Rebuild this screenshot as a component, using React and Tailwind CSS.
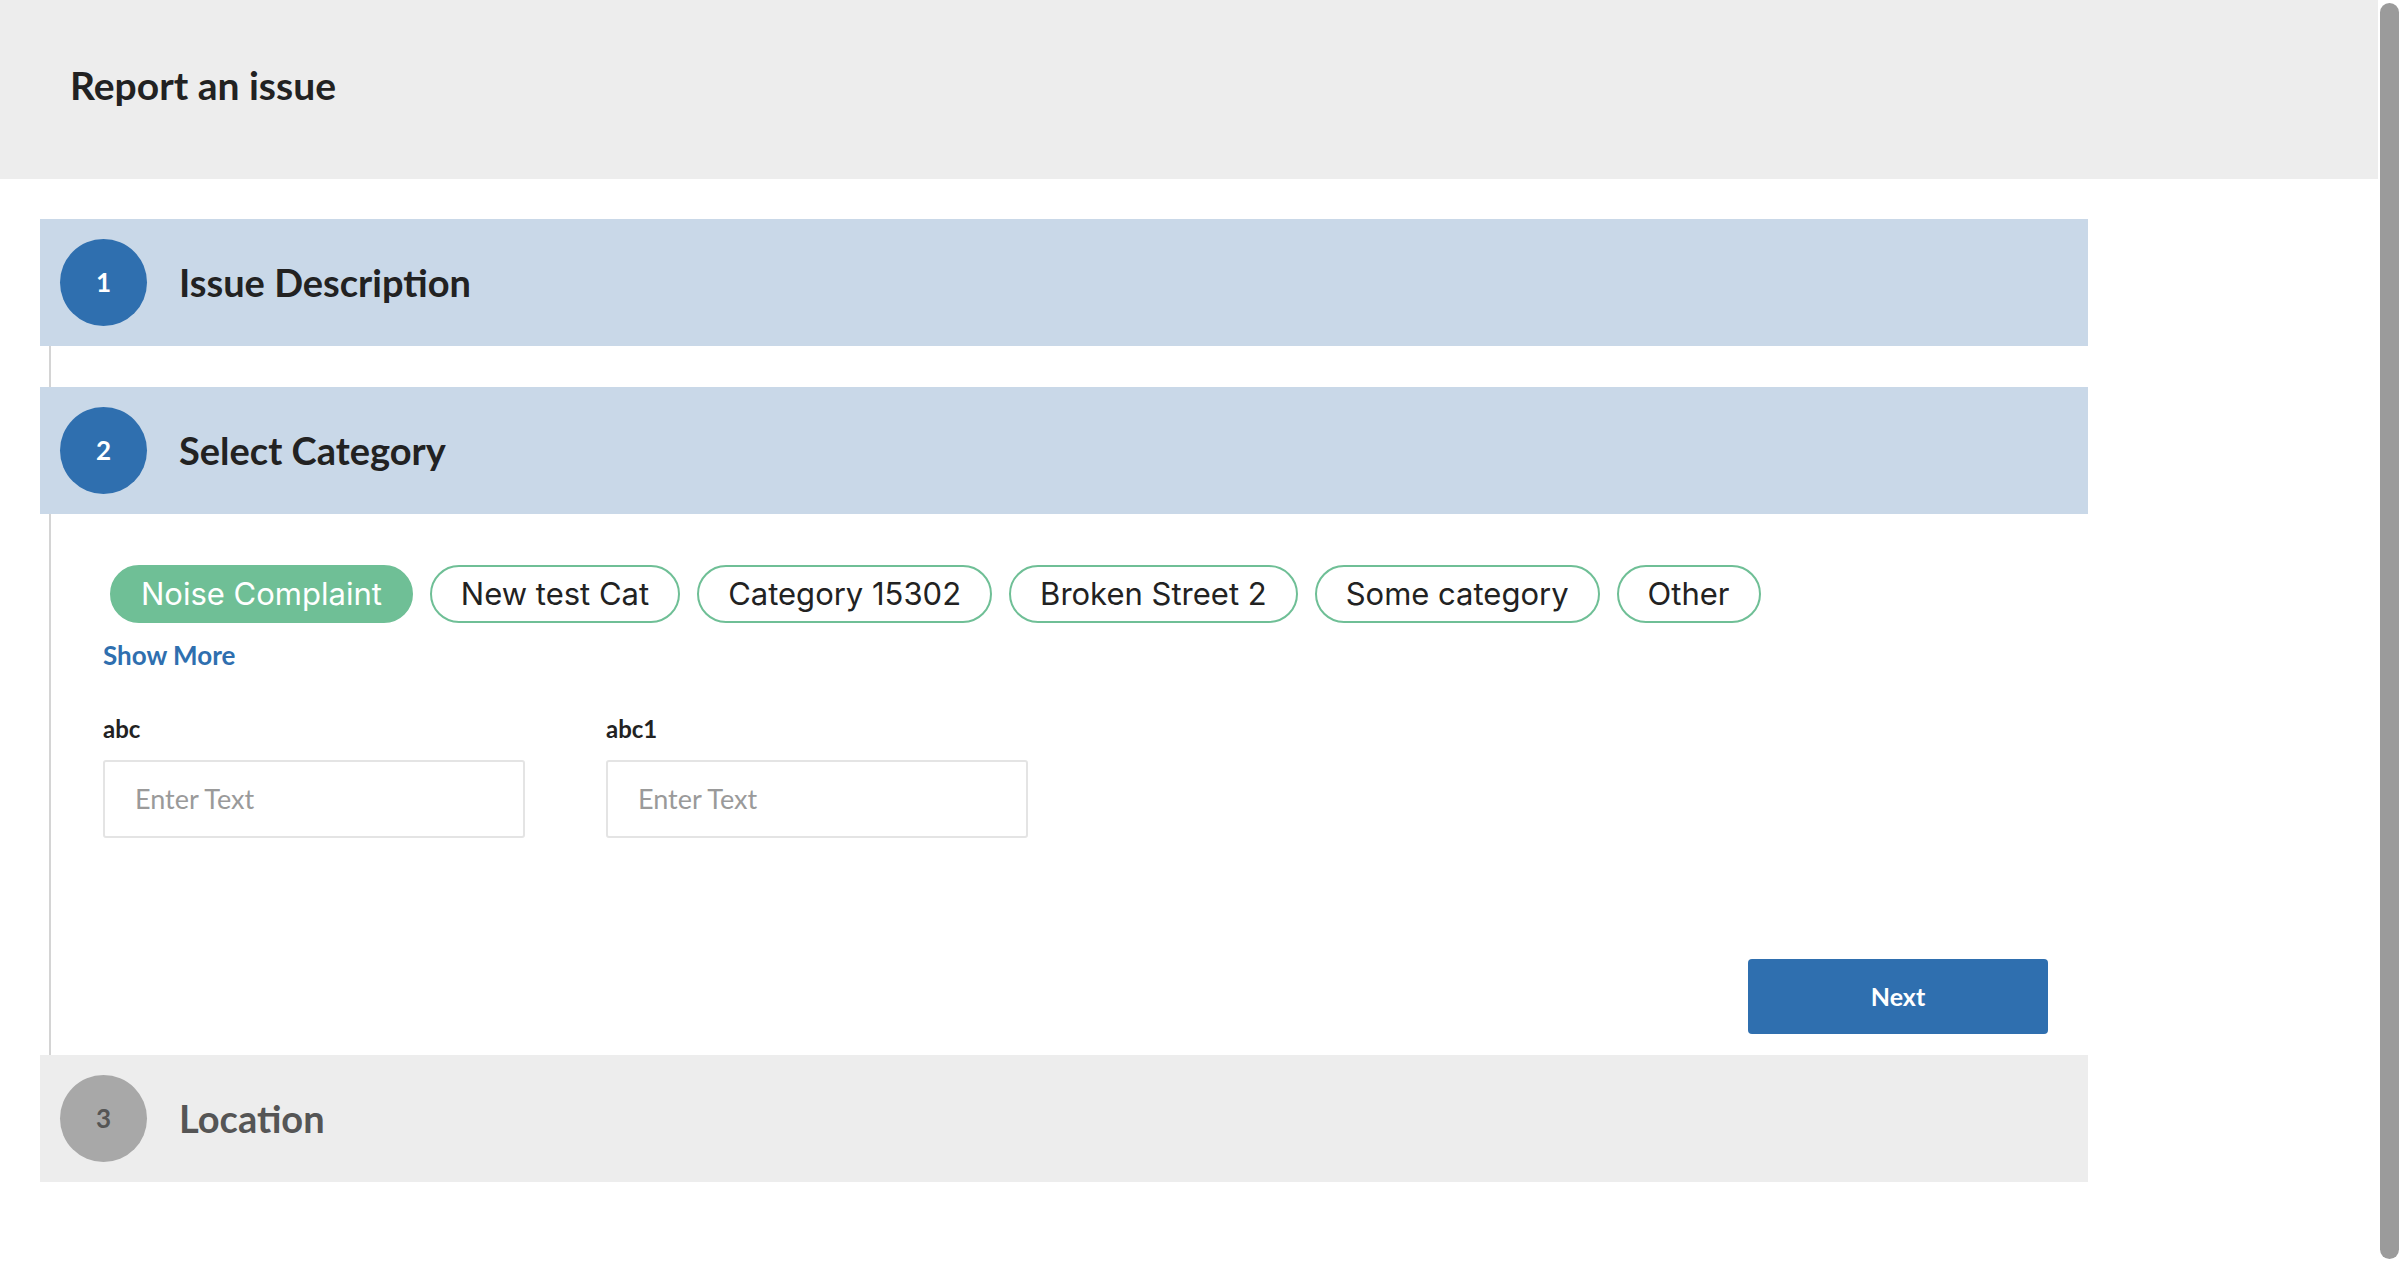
import React from "react";

const head = { fontFamily: '"Source Sans Pro", Lato, "Liberation Sans", sans-serif' };
const chipFont = { fontFamily: 'Inter, "Liberation Sans", sans-serif' };

function StepBar({ n, title, active }) {
  return (
    <div
      className={`h-[127px] flex items-center pl-[20px] ${active ? "bg-[#c9d8e8]" : "bg-[#ededed]"}`}
    >
      <div
        className={`w-[87px] h-[87px] rounded-full flex items-center justify-center text-[26px] font-bold ${
          active ? "bg-[#2f6faf] text-white" : "bg-[#a8a8a8] text-[#555555]"
        }`}
        style={head}
      >
        {n}
      </div>
      <div
        className={`ml-[32px] text-[38px] font-bold ${active ? "text-[#222222]" : "text-[#555555]"}`}
        style={head}
      >
        {title}
      </div>
    </div>
  );
}

const chips = ["Noise Complaint", "New test Cat", "Category 15302", "Broken Street 2", "Some category", "Other"];

export default function App() {
  return (
    <div className="w-[2400px] h-[1262px] flex bg-white overflow-hidden">
      <div className="flex-1 flex flex-col">
        <div className="h-[179px] bg-[#ededed] flex items-center pl-[70px] pb-[8px]">
          <h1 className="text-[39px] font-bold text-[#222222]" style={head}>
            Report an issue
          </h1>
        </div>
        <div className="ml-[40px] mt-[40px] w-[2048px] flex flex-col">
          <StepBar n="1" title="Issue Description" active />
          <div className="ml-[9px] h-[41px] border-l-2 border-[#d4d4d4]" />
          <StepBar n="2" title="Select Category" active />
          <div className="ml-[9px] border-l-2 border-[#d4d4d4] flex flex-col pl-[52px] pr-[40px] pt-[51px] pb-[21px]">
            <div className="flex gap-[17px] pl-[7px]" style={chipFont}>
              {chips.map((c, i) => (
                <div
                  key={c}
                  className={`h-[58px] px-[29px] rounded-full border-2 border-[#6fbf96] flex items-center text-[31px] ${
                    i === 0 ? "bg-[#6fbf96] text-white" : "bg-white text-[#222222]"
                  }`}
                >
                  {c}
                </div>
              ))}
            </div>
            <div className="mt-[13px] text-[26px] font-bold text-[#2f6faf]" style={head}>
              Show More
            </div>
            <div className="mt-[40px] flex gap-[81px]" style={head}>
              {["abc", "abc1"].map((l) => (
                <div key={l} className="flex flex-col">
                  <div className="text-[24px] font-bold text-[#222222] leading-[28px]">{l}</div>
                  <div className="mt-[17px] w-[422px] h-[78px] border-2 border-[#e4e4e4] rounded-[3px] flex items-center pl-[30px] text-[27px] text-[#9a9a9a]">
                    Enter Text
                  </div>
                </div>
              ))}
            </div>
            <div className="mt-[121px] flex justify-end">
              <div
                className="w-[300px] h-[75px] rounded-[4px] bg-[#2f6faf] flex items-center justify-center text-white text-[25px] font-bold"
                style={head}
              >
                Next
              </div>
            </div>
          </div>
          <StepBar n="3" title="Location" />
        </div>
      </div>
      <div className="w-[22px] flex flex-col py-[3px] pl-[2px] pr-[1px]">
        <div className="flex-1 rounded-full bg-[#9b9b9b]" />
      </div>
    </div>
  );
}
